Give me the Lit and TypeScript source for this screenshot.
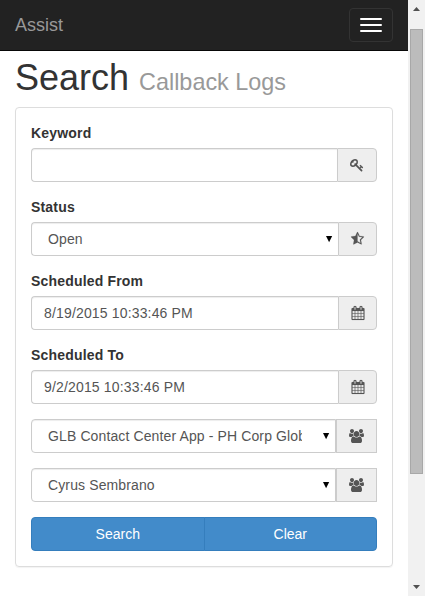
import { LitElement, html, css, svg } from "lit";
import { customElement } from "lit/decorators.js";

const icons: Record<string, { w: number; d: string }> = {
  key: { w: 1792, d: "M832 512q0-80-56-136t-136-56-136 56-56 136q0 42 19 83-41-19-83-19-80 0-136 56t-56 136 56 136 136 56 136-56 56-136q0-42-19-83 41 19 83 19 80 0 136-56t56-136zm851 704q0 17-49 66t-66 49q-9 0-28.5-16t-36.5-33-38.5-40-24.5-26l-96 96 220 220q28 28 28 68 0 42-39 81t-81 39q-40 0-68-28l-671-671q-176 131-365 131-163 0-265.5-102.5t-102.5-265.5q0-160 95-313t248-248 313-95q163 0 265.5 102.5t102.5 265.5q0 189-131 365l355 355 96-96q-3-3-26-24.5t-40-38.5-33-36.5-16-28.5q0-17 49-66t66-49q13 0 23 10 6 6 46 44.5t82 79.5 86.5 86 73 78 28.5 41z" },
  star: { w: 1792, d: "M1186 925l257-250-356-52-66-10-30-60-159-322v963l59 31 318 168-60-355-12-66zm452-262l-363 354 86 500q5 33-6 51.5t-34 18.5q-17 0-40-12l-449-236-449 236q-23 12-40 12-23 0-34-18.5t-6-51.5l86-500-364-354q-32-32-23-59.5t54-34.5l502-73 225-455q20-41 49-41 28 0 49 41l225 455 502 73q45 7 54 34.5t-24 59.5z" },
  calendar: { w: 1792, d: "M192 1664h288v-288h-288v288zm352 0h320v-288h-320v288zm-352-352h288v-320h-288v320zm352 0h320v-320h-320v320zm-352-384h288v-288h-288v288zm736 736h320v-288h-320v288zm-384-736h320v-288h-320v288zm768 736h288v-288h-288v288zm-384-352h320v-320h-320v320zm-352-864v-288q0-13-9.5-22.5t-22.5-9.5h-64q-13 0-22.5 9.5t-9.5 22.5v288q0 13 9.5 22.5t22.5 9.5h64q13 0 22.5-9.5t9.5-22.5zm736 864h288v-320h-288v320zm-384-384h320v-288h-320v288zm384 0h288v-288h-288v288zm32-480v-288q0-13-9.5-22.5t-22.5-9.5h-64q-13 0-22.5 9.5t-9.5 22.5v288q0 13 9.5 22.5t22.5 9.5h64q13 0 22.5-9.5t9.5-22.5zm384-64v1280q0 52-38 90t-90 38h-1408q-52 0-90-38t-38-90v-1280q0-52 38-90t90-38h128v-96q0-66 47-113t113-47h64q66 0 113 47t47 113v96h384v-96q0-66 47-113t113-47h64q66 0 113 47t47 113v96h128q52 0 90 38t38 90z" },
  users: { w: 1920, d: "M593 896q-162 5-265 128h-134q-82 0-138-40.5t-56-118.5q0-353 124-353 6 0 43.5 21t97.5 42.5 119 21.5q67 0 133-23-5 37-5 66 0 139 81 256zm1071 637q0 120-73 189.5t-194 69.5h-874q-121 0-194-69.5t-73-189.5q0-53 3.5-103.5t14-109 26.5-108.5 43-97.5 62-81 85.5-53.5 111.5-20q10 0 43 21.5t73 48 107 48 135 21.5 135-21.5 107-48 73-48 43-21.5q61 0 111.5 20t85.5 53.5 62 81 43 97.5 26.5 108.5 14 109 3.5 103.5zm-1024-1277q0 106-75 181t-181 75-181-75-75-181 75-181 181-75 181 75 75 181zm704 384q0 159-112.5 271.5t-271.5 112.5-271.5-112.5-112.5-271.5 112.5-271.5 271.5-112.5 271.5 112.5 112.5 271.5zm576 225q0 78-56 118.5t-138 40.5h-134q-103-123-265-128 81-117 81-256 0-29-5-66 66 23 133 23 59 0 119-21.5t97.5-42.5 43.5-21q124 0 124 353zm-128-609q0 106-75 181t-181 75-181-75-75-181 75-181 181-75 181 75 75 181z" },
};

const icon = (name: string) => {
  const { w, d } = icons[name];
  return html`<svg class="icon ${name}" viewBox="0 0 ${w} 1792">${svg`<path d=${d}></path>`}</svg>`;
};

@customElement("app-root")
export class AppRoot extends LitElement {
  static styles = css`
    :host {
      display: flex;
      width: 425px;
      height: 596px;
      overflow: hidden;
      background: #fff;
      color: #333;
      font: 14px/20px "Liberation Sans", Arial, sans-serif;
    }
    * { box-sizing: border-box; }
    .page { width: 408px; }
    .navbar {
      display: flex;
      justify-content: space-between;
      align-items: center;
      height: 51px;
      padding: 0 15px;
      background: #222;
      border-bottom: 1px solid #080808;
    }
    .brand { color: #999; font-size: 18px; }
    .toggle {
      display: flex;
      flex-direction: column;
      gap: 4px;
      width: 44px;
      height: 34px;
      padding: 9px 10px;
      border: 1px solid #333;
      border-radius: 4px;
      background: transparent;
    }
    .bar { width: 22px; height: 2px; border-radius: 1px; background: #fff; }
    h1 {
      margin: 0;
      height: 56px;
      padding: 7px 15px 0;
      font-size: 36px;
      line-height: 40px;
      font-weight: 400;
      white-space: nowrap;
    }
    h1 small { color: #999; font-size: 23.4px; line-height: 1; }
    .panel {
      margin: 0 15px;
      height: 460px;
      padding: 15px;
      border: 1px solid #ddd;
      border-radius: 4px;
      box-shadow: 0 1px 1px rgba(0, 0, 0, 0.05);
    }
    .label { display: block; height: 25px; font-weight: 700; letter-spacing: 0.18px; }
    .group { display: flex; height: 34px; margin-bottom: 15px; }
    .control {
      display: flex;
      align-items: center;
      flex: 1;
      min-width: 0;
      padding: 0 12px;
      border: 1px solid #ccc;
      border-right: 0;
      border-radius: 4px 0 0 4px;
      box-shadow: inset 0 1px 1px rgba(0, 0, 0, 0.075);
      color: #555;
      letter-spacing: 0.16px;
    }
    .select { padding: 0 5px 0 16px; letter-spacing: 0.12px; }
    .loose .select { border-right: 1px solid #ccc; }
    .value { flex: 1; overflow: hidden; white-space: nowrap; }
    .select .value { margin-right: 20px; }
    .arrow { width: 8px; height: 8px; fill: #000; }
    .addon {
      display: flex;
      align-items: center;
      justify-content: center;
      width: 39px;
      border: 1px solid #ccc;
      border-radius: 0 4px 4px 0;
      background: #eee;
    }
    .addon.wide { width: 40px; }
    .loose .addon { width: 41px; border-radius: 0; }
    .icon { width: 14px; height: 14px; fill: #555; overflow: visible; }
    .star { stroke: #555; stroke-width: 20; }
    .calendar { stroke: #555; stroke-width: 15; }
    .users { width: 15px; }
    .actions { display: flex; height: 34px; }
    .btn {
      flex: 1;
      border: 1px solid #357ebd;
      background: #428bca;
      color: #fff;
      font: inherit;
      padding: 0;
    }
    .btn:first-child { border-radius: 4px 0 0 4px; }
    .btn:last-child { border-radius: 0 4px 4px 0; margin-left: -1px; }
    .scroll {
      display: flex;
      flex-direction: column;
      width: 17px;
      background: #f1f1f1;
      padding: 0 2px;
    }
    .cap { width: 13px; height: 29px; fill: #505050; }
    .thumb { height: 445px; margin-bottom: auto; background: #bcbcbc; border: 1px solid #a8a8a8; }
  `;

  private field(label: string, value: string, name: string, select = false) {
    return html`
      ${label ? html`<label class="label">${label}</label>` : ""}
      <div class="group ${label ? "" : "loose"}">
        <div class="control ${select ? "select" : ""}">
          <span class="value">${value}</span>
          ${select ? html`<svg class="arrow" viewBox="0 0 8 8"><path d="M1 1H7.2L4.1 7.2Z"></path></svg>` : ""}
        </div>
        <span class="addon ${name === "key" ? "wide" : ""}">${icon(name)}</span>
      </div>`;
  }

  render() {
    return html`
      <div class="page">
        <nav class="navbar">
          <span class="brand">Assist</span>
          <button class="toggle"><span class="bar"></span><span class="bar"></span><span class="bar"></span></button>
        </nav>
        <h1>Search <small>Callback Logs</small></h1>
        <div class="panel">
          ${this.field("Keyword", "", "key")}
          ${this.field("Status", "Open", "star", true)}
          ${this.field("Scheduled From", "8/19/2015 10:33:46 PM", "calendar")}
          ${this.field("Scheduled To", "9/2/2015 10:33:46 PM", "calendar")}
          ${this.field("", "GLB Contact Center App - PH Corp Globe", "users", true)}
          ${this.field("", "Cyrus Sembrano", "users", true)}
          <div class="actions"><button class="btn">Search</button><button class="btn">Clear</button></div>
        </div>
      </div>
      <div class="scroll">
        <svg class="cap" viewBox="0 0 13 29"><path d="M3 11L6.5 7L10 11Z"></path></svg>
        <div class="thumb"></div>
        <svg class="cap" viewBox="0 0 13 29"><path d="M3 18L6.5 22L10 18Z"></path></svg>
      </div>`;
  }
}
